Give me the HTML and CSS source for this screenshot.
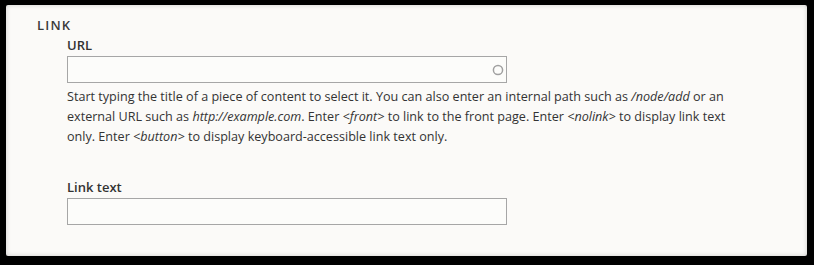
FILE: index.html
```html
<!DOCTYPE html>
<html>
<head>
<meta charset="utf-8">
<link rel="stylesheet" href="styles.css">
</head>
<body>
<div class="frame">
  <fieldset class="panel">
    <div class="legend">LINK</div>
    <div class="field">
      <label class="label">URL</label>
      <div class="input autocomplete">
        <svg class="throbber" width="12" height="12" viewBox="0 0 12 12"><circle cx="6" cy="6" r="4.6" fill="none" stroke="#a0a0a0" stroke-width="1.5"/></svg>
      </div>
      <div class="desc">Start typing the title of a piece of content to select it. You can also enter an internal path such as <em>/node/add</em> or an external URL such as <em>http://example.com</em>. Enter <em>&lt;front&gt;</em> to link to the front page. Enter <em>&lt;nolink&gt;</em> to display link text only. Enter <em>&lt;button&gt;</em> to display keyboard-accessible link text only.</div>
    </div>
    <div class="field second">
      <label class="label">Link text</label>
      <div class="input"></div>
    </div>
  </fieldset>
</div>
</body>
</html>
```
FILE: styles.css
```css
html, body {
  margin: 0;
  padding: 0;
  background: #000;
  height: 265px;
  overflow: hidden;
}
.frame {
  box-sizing: border-box;
  height: 265px;
  padding: 5px 7px 9px 6px;
  display: flex;
}
.panel {
  flex: 1;
  margin: 0;
  border: 0;
  background: #fbfaf8;
  box-shadow: inset 0 0 5px rgba(0,0,0,0.18);
  border-radius: 2px;
  padding: 11px 0 0 31px;
  font-family: "Open Sans", sans-serif;
  color: #333;
  display: flex;
  flex-direction: column;
}
.legend {
  font-size: 13px;
  font-weight: 600;
  letter-spacing: 1.2px;
  line-height: 18px;
  color: #3b3b3b;
}
.field {
  padding-left: 30px;
  display: flex;
  flex-direction: column;
}
.label {
  font-size: 13px;
  font-weight: 600;
  line-height: 18px;
  margin-top: 2px;
  margin-bottom: 2px;
  color: #333;
}
.input {
  box-sizing: border-box;
  width: 440px;
  height: 27px;
  border: 1px solid #a6a6a6;
  background: #fcfcfa;
  display: flex;
  align-items: center;
  justify-content: flex-end;
}
.throbber {
  margin-right: 2px;
}
.desc {
  width: 664px;
  font-size: 12.6px;
  line-height: 20px;
  margin-top: 4px;
  color: #333;
}
.desc em {
  font-style: italic;
}
.second {
  margin-top: 29px;
}
```
